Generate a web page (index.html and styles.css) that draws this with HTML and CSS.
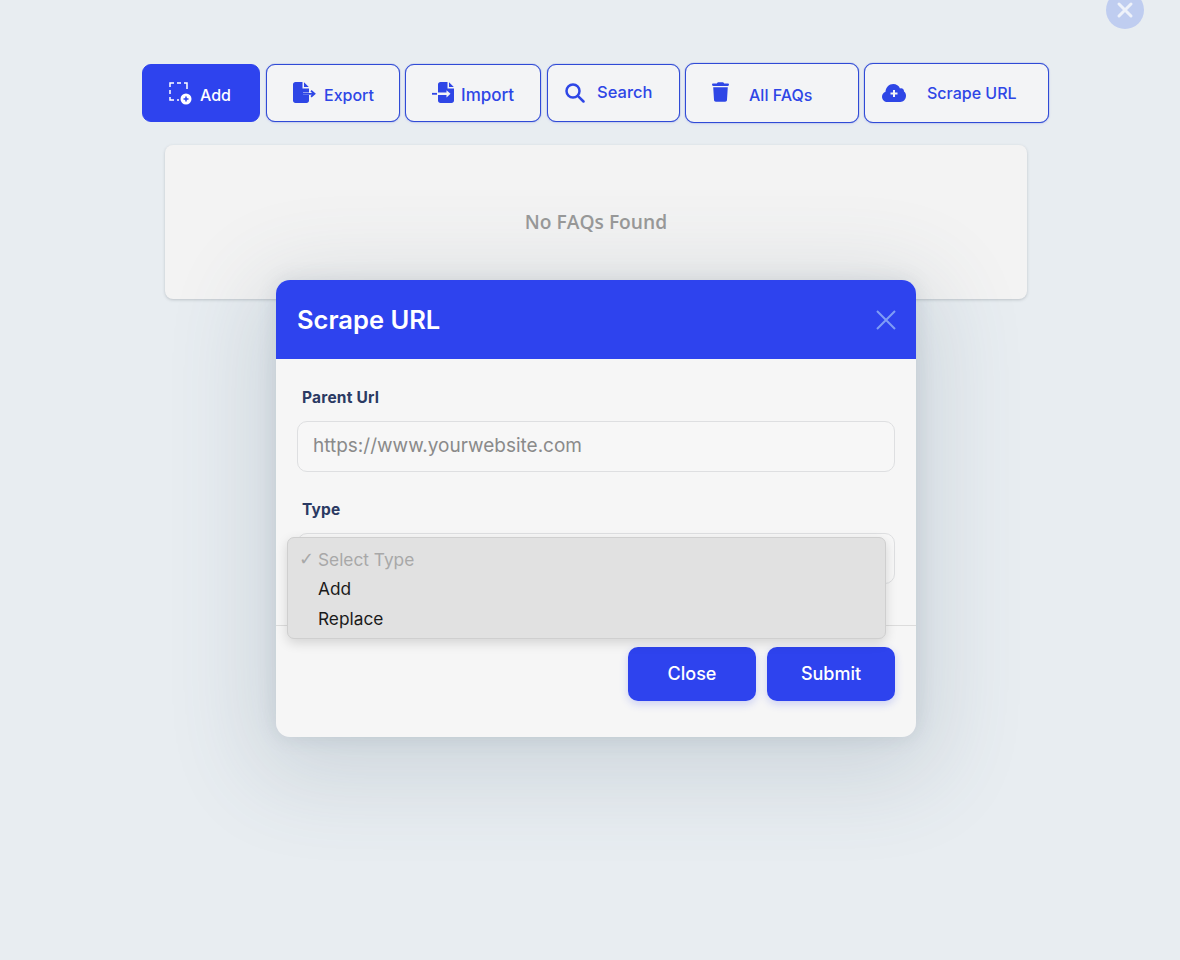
FILE: index.html
```html
<!DOCTYPE html>
<html lang="en">
<head>
<meta charset="utf-8">
<title>Scrape URL</title>
<link rel="stylesheet" href="styles.css">
</head>
<body>
<div class="top-close"><svg viewBox="0 0 20 20" width="20" height="20"><path d="M4 4L16 16M16 4L4 16" class="x-thick"/></svg></div>
<main class="page">
  <nav class="toolbar">
    <button class="tool tool-add"><svg class="ic ic-add" viewBox="0 0 24 24"><path class="dash" d="M2 6V2H6M9 2H13M16 2H19V8M2 9V13M2 16V19H6M9 19H11"/><circle cx="18" cy="18" r="5.500" fill="#fff"/><path d="M18 15.500V20.500M15.500 18H20.500" class="plus"/></svg><span>Add</span></button>
    <button class="tool tool-export"><svg class="ic ic-file" viewBox="0 0 24 24"><path fill="currentColor" d="M2.500 0H9.500V6.500H16V10.500H10L10 13H16V18.500C16 20 15 21 13.500 21H2.500C1 21 0 20 0 18.500V2.500C0 1 1 0 2.500 0ZM11 0.200L15.800 5H11Z"/><path d="M10 11.800H21M18 8.800L21.500 11.800L18 14.800" class="arrow"/></svg><span>Export</span></button>
    <button class="tool tool-import"><svg class="ic ic-file" viewBox="0 0 24 24"><path fill="currentColor" d="M8.500 0H15.500V6.500H22V18.500C22 20 21 21 19.500 21H8.500C7 21 6 20 6 18.500V13H14.500V15.500L18.500 11.800L14.500 8.200V10.500H6V2.500C6 1 7 0 8.500 0ZM17 0.200L21.800 5H17Z"/><path d="M0 11.800H5" class="arrow"/></svg><span>Import</span></button>
    <button class="tool tool-search"><svg class="ic ic-search" viewBox="0 0 20 20"><circle cx="8" cy="8" r="6.500"/><path d="M12.800 12.800L18.500 18.500"/></svg><span>Search</span></button>
    <button class="tool tool-faqs"><svg class="ic ic-trash" viewBox="0 0 448 512"><path fill="currentColor" d="M135.200 17.700L128 32H32C14.300 32 0 46.300 0 64S14.300 96 32 96H416c17.700 0 32-14.300 32-32s-14.300-32-32-32H320l-7.200-14.300C307.400 6.800 296.300 0 284.200 0H163.800c-12.100 0-23.200 6.800-28.600 17.700zM416 128H32L53.200 467c1.600 25.300 22.600 45 47.900 45H346.900c25.300 0 46.300-19.700 47.900-45L416 128z"/></svg><span>All FAQs</span></button>
    <button class="tool tool-scrape"><svg class="ic ic-cloud" viewBox="0 0 24 18"><path fill="currentColor" d="M5.500 18C2.500 18 0 15.600 0 12.700C0 10.500 1.400 8.500 3.500 7.800C3.700 3.500 7 0 11.300 0C14.300 0 16.900 1.800 18 4.400C18.400 4.300 18.800 4.200 19.200 4.200C20.900 4.200 22.200 5.500 22 7.500C23.300 8.400 24 10 24 11.800C24 15.200 21.400 18 18.300 18Z"/><path d="M12 6V13M8.500 9.500H15.500" class="cloud-plus"/></svg><span>Scrape URL</span></button>
  </nav>
  <section class="empty-card"><p>No FAQs Found</p></section>
</main>
<div class="modal">
  <header class="modal-head">
    <h2>Scrape URL</h2>
    <svg class="modal-x" viewBox="0 0 20 20"><path d="M1 1L19 19M19 1L1 19"/></svg>
  </header>
  <div class="modal-body">
    <label class="field-label">Parent Url</label>
    <div class="field"><span class="placeholder">https://www.yourwebsite.com</span></div>
    <label class="field-label type-label">Type</label>
    <div class="field"></div>
  </div>
  <footer class="modal-foot">
    <button class="action">Close</button>
    <button class="action">Submit</button>
  </footer>
  <ul class="dropdown">
    <li class="opt opt-muted"><span class="check">✓</span>Select Type</li>
    <li class="opt">Add</li>
    <li class="opt">Replace</li>
  </ul>
</div>
</body>
</html>
```

FILE: styles.css
```css
* { box-sizing: border-box; }
html, body { margin: 0; padding: 0; }
body {
  width: 1180px;
  height: 960px;
  overflow: hidden;
  position: relative;
  background: #e8edf1;
  font-family: "Inter", "Liberation Sans", sans-serif;
}
.top-close {
  position: absolute;
  left: 1106px;
  top: -9px;
  width: 38px;
  height: 38px;
  border-radius: 50%;
  background: #bfcdf0;
  display: flex;
  align-items: center;
  justify-content: center;
}
.x-thick { stroke: #eef2fa; stroke-width: 3; stroke-linecap: round; fill: none; }

.page { padding: 63px 0 0 142px; }
.toolbar { display: flex; align-items: center; }
.tool {
  display: flex;
  align-items: center;
  height: 58px;
  padding: 0;
  margin-right: 6px;
  border: 1px solid #2f4ad6;
  border-radius: 9px;
  background: #f3f4f6;
  color: #2e46e6;
  font: 500 16px "Inter", sans-serif;
  box-shadow: 0 0 1px #2f4ad6, 0 1px 3px rgba(46, 67, 238, .1);
}
.tool span { position: relative; top: 2px; }
.ic { display: block; flex: none; }
.tool-add { width: 118px; padding-left: 25px; background: #2e43ee; border-color: #2e43ee; color: #fff; box-shadow: none; }
.tool-add span { margin-left: 8px; }
.ic-add { width: 24px; height: 24px; }
.dash { fill: none; stroke: #fff; stroke-width: 1.500; }
.plus { stroke: #2e43ee; stroke-width: 1.500; fill: none; }
.tool-export { width: 134px; padding-left: 26px; margin-right: 5px; }
.tool-export span { margin-left: 7px; font-size: 16px; }
.tool-import { width: 136px; padding-left: 26px; }
.tool-import span { margin-left: 5px; font-size: 17px; }
.ic-file { width: 24px; height: 24px; position: relative; top: 1px; }
.arrow { fill: none; stroke: currentColor; stroke-width: 1.800; }
.tool-search { width: 133px; padding-left: 17px; margin-right: 5px; }
.tool-search span { margin-left: 12px; font-size: 16.500px; top: -1px; }
.ic-search { width: 20px; height: 20px; fill: none; stroke: currentColor; stroke-width: 2.500; stroke-linecap: round; }
.tool-faqs { width: 174px; height: 60px; padding-left: 26px; margin-right: 5px; }
.tool-faqs span { margin-left: 20px; top: 2px; }
.ic-trash { width: 17px; height: 20px; position: relative; top: -1px; }
.tool-scrape { width: 185px; height: 60px; padding-left: 17px; margin-right: 0; }
.tool-scrape span { margin-left: 21px; top: 0; }
.ic-cloud { width: 24px; height: 18px; }
.cloud-plus { stroke: #f3f4f6; stroke-width: 2; fill: none; }

.empty-card {
  width: 862px;
  height: 154px;
  margin: 22px 0 0 23px;
  padding-bottom: 2px;
  display: flex;
  align-items: center;
  justify-content: center;
  background: #f3f3f3;
  border-radius: 8px;
  box-shadow: 0 1px 3px rgba(90, 100, 110, .3);
}
.empty-card p {
  margin: 0;
  color: #999;
  font: 600 19.200px "Open Sans", sans-serif;
}

.modal {
  position: absolute;
  left: 276px;
  top: 280px;
  width: 640px;
  height: 457px;
  background: #f6f6f6;
  border-radius: 14px;
  box-shadow: 0 20px 90px 20px rgba(70, 95, 115, .16), 0 0 20px rgba(70, 90, 115, .14);
}
.modal-head {
  height: 79px;
  padding: 0 20px 0 21px;
  display: flex;
  align-items: center;
  justify-content: space-between;
  background: #2e43ee;
  border-radius: 14px 14px 0 0;
}
.modal-head h2 {
  margin: 0;
  color: #fff;
  font: 600 25.500px "Inter", sans-serif;
}
.modal-x { width: 20px; height: 20px; fill: none; stroke: #7f9df5; stroke-width: 2; }
.modal-body { padding: 29px 21px 0; height: 267px; border-bottom: 1px solid #dcdcdc; }
.field-label {
  display: block;
  height: 18px;
  margin-left: 5px;
  color: #2b3a63;
  font: 700 15.500px/20px "Inter", sans-serif;
  letter-spacing: .2px;
}
.type-label { margin-top: 28px; }
.field {
  height: 51px;
  margin-top: 15px;
  padding: 0 0 2px 15px;
  display: flex;
  align-items: center;
  border: 1px solid #dedfe1;
  border-radius: 10px;
  background: #f7f7f7;
}
.placeholder { color: #8a8a8a; font-size: 19px; white-space: nowrap; }
.modal-foot {
  display: flex;
  justify-content: flex-end;
  gap: 11px;
  padding: 21px 21px 0;
}
.action {
  width: 128px;
  height: 54px;
  padding: 0 0 2px;
  border: 0;
  border-radius: 10px;
  background: #2e43ee;
  color: #fff;
  font: 500 18px "Inter", sans-serif;
  box-shadow: 0 3px 8px rgba(46, 67, 238, .22);
}
.dropdown {
  position: absolute;
  left: 11px;
  top: 257px;
  width: 599px;
  height: 102px;
  margin: 0;
  padding: 6.500px 0 0 30px;
  list-style: none;
  background: #e1e1e1;
  border: 1px solid #cfcfcf;
  border-radius: 7px;
  box-shadow: 0 4px 12px rgba(0, 0, 0, .14);
}
.opt {
  position: relative;
  height: 29.500px;
  color: #1a1a1a;
  font-size: 17.300px;
  line-height: 29.500px;
}
.opt-muted { color: #a8a8a8; }
.check { position: absolute; left: -19px; top: -1px; font-family: "DejaVu Sans", sans-serif; font-size: 18px; }
```
